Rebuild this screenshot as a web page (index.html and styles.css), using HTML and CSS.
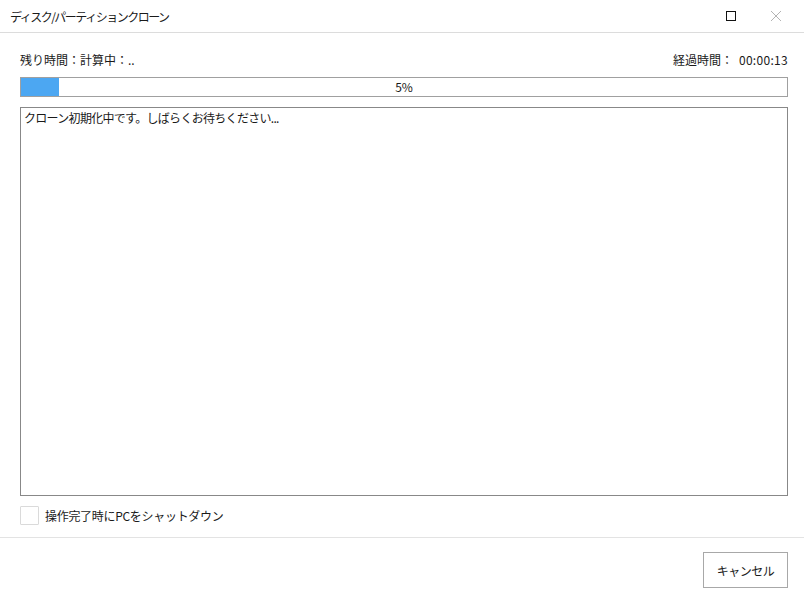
FILE: index.html
```html
<!DOCTYPE html>
<html lang="ja">
<head>
  <meta charset="UTF-8">
  <title>ディスク/パーティションクローン</title>
  <link rel="stylesheet" href="styles.css">
</head>
<body>
  <div class="window">
    <div class="titlebar">
      <span class="title">ディスク/パーティションクローン</span>
      <div class="controls">
        <span class="ctl max"><span class="box"></span></span>
        <span class="ctl close">
          <svg width="12" height="12" viewBox="0 0 12 12"><path d="M1 1 L11 11 M11 1 L1 11" stroke="#b4b4b4" stroke-width="1" fill="none"/></svg>
        </span>
      </div>
    </div>

    <div class="content">
      <div class="times">
        <span>残り時間：計算中：..</span>
        <span>経過時間：<span class="elapsed">00:00:13</span></span>
      </div>
      <div class="progress">
        <div class="fill" style="width: 5%"></div>
        <span class="pct">5%</span>
      </div>
      <div class="log">クローン初期化中です。しばらくお待ちください...</div>
      <label class="shutdown">
        <span class="check"></span>
        操作完了時にPCをシャットダウン
      </label>
    </div>

    <div class="footer">
      <button class="btn">キャンセル</button>
    </div>
  </div>
</body>
</html>
```

FILE: styles.css
```css
body {
  margin: 0;
  background: #fff;
  font-family: "Noto Sans CJK JP", "Noto Sans", sans-serif;
  font-size: 12px;
  color: #1a1a1a;
}
.window {
  width: 804px;
  height: 604px;
  display: flex;
  flex-direction: column;
}
.titlebar {
  height: 33px;
  border-bottom: 1px solid #dcdcdc;
  display: flex;
  align-items: center;
  justify-content: space-between;
  padding-left: 10px;
  box-sizing: border-box;
}
.title {
  letter-spacing: -1.5px;
}
.controls {
  display: flex;
  height: 100%;
}
.ctl {
  width: 45px;
  display: flex;
  align-items: center;
  justify-content: center;
}
.max .box {
  width: 8px;
  height: 8px;
  border: 1.5px solid #111;
}
.close {
  margin-right: 6px;
}
.content {
  padding: 17px 16px 0 20px;
}
.times {
  display: flex;
  justify-content: space-between;
  height: 20px;
  line-height: 20px;
}
.elapsed {
  margin-left: 6px;
  letter-spacing: 0.3px;
}
.progress {
  position: relative;
  margin-top: 7px;
  height: 20px;
  border: 1px solid #a0a0a0;
  box-sizing: border-box;
}
.progress .fill {
  height: 100%;
  background: #4ca7f2;
}
.progress .pct {
  position: absolute;
  left: 0;
  right: 0;
  top: 0;
  line-height: 18px;
  text-align: center;
}
.log {
  margin-top: 10px;
  height: 389px;
  border: 1px solid #888;
  box-sizing: border-box;
  padding: 2px 3px;
  line-height: 16px;
  letter-spacing: -0.7px;
}
.shutdown {
  display: flex;
  align-items: center;
  gap: 6px;
  margin-top: 10px;
  height: 19px;
  letter-spacing: -0.3px;
}
.check {
  width: 17px;
  height: 17px;
  border: 1px solid #dadada;
  border-radius: 1px;
}
.footer {
  margin-top: 12px;
  border-top: 1px solid #e3e3e3;
  display: flex;
  justify-content: flex-end;
  padding: 14px 16px 0 0;
}
.btn {
  width: 85px;
  height: 36px;
  background: #fff;
  border: 1px solid #a8a8a8;
  font-family: inherit;
  font-size: 12px;
  color: #1a1a1a;
  letter-spacing: -0.5px;
}
```
